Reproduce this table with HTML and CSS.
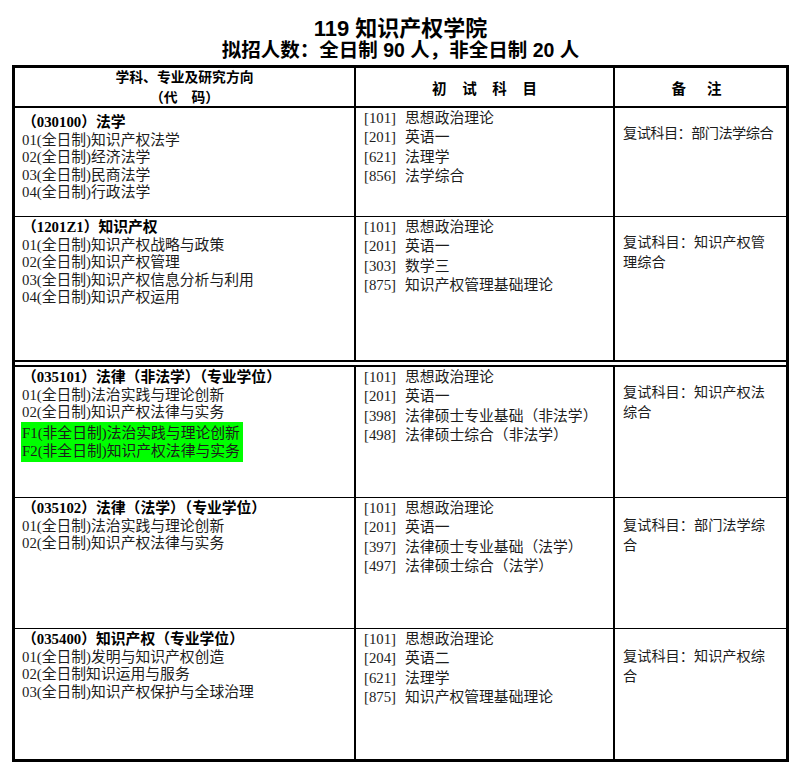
FILE: index.html
```html
<!DOCTYPE html>
<html lang="zh-CN">
<head>
<meta charset="utf-8">
<title>119 知识产权学院</title>
<link rel="stylesheet" href="styles.css">
</head>
<body>
<div class="page">
  <div class="heading">
    <div class="title">119 知识产权学院</div>
    <div class="subtitle">拟招人数：全日制 90 人，非全日制 20 人</div>
  </div>
  <div class="grid">
    <div class="cell hd hd1"><div>学科、专业及研究方向</div><div>（代　码）</div></div>
    <div class="cell hd hd2"><span>初</span><span>试</span><span>科</span><span>目</span></div>
    <div class="cell hd hd3"><span>备</span><span>注</span></div>

    <div class="cell c1 r1 first">
      <div class="major">（030100）法学</div>
      <div>01(全日制)知识产权法学</div>
      <div>02(全日制)经济法学</div>
      <div>03(全日制)民商法学</div>
      <div>04(全日制)行政法学</div>
    </div>
    <div class="cell c2 r1">
      <div><span class="code">[101]</span>思想政治理论</div>
      <div><span class="code">[201]</span>英语一</div>
      <div><span class="code">[621]</span>法理学</div>
      <div><span class="code">[856]</span>法学综合</div>
    </div>
    <div class="cell c3 r1"><div class="tight">复试科目：部门法学综合</div></div>

    <div class="cell c1 r2">
      <div class="major">（1201Z1）知识产权</div>
      <div>01(全日制)知识产权战略与政策</div>
      <div>02(全日制)知识产权管理</div>
      <div>03(全日制)知识产权信息分析与利用</div>
      <div>04(全日制)知识产权运用</div>
    </div>
    <div class="cell c2 r2">
      <div><span class="code">[101]</span>思想政治理论</div>
      <div><span class="code">[201]</span>英语一</div>
      <div><span class="code">[303]</span>数学三</div>
      <div><span class="code">[875]</span>知识产权管理基础理论</div>
    </div>
    <div class="cell c3 r2"><div>复试科目：知识产权管</div><div>理综合</div></div>

    <div class="sep"></div>

    <div class="cell c1 r3">
      <div class="major">（035101）法律（非法学）（专业学位）</div>
      <div>01(全日制)法治实践与理论创新</div>
      <div>02(全日制)知识产权法律与实务</div>
      <div class="mark">
        <div>F1(非全日制)法治实践与理论创新</div>
        <div>F2(非全日制)知识产权法律与实务</div>
      </div>
    </div>
    <div class="cell c2 r3">
      <div><span class="code">[101]</span>思想政治理论</div>
      <div><span class="code">[201]</span>英语一</div>
      <div><span class="code">[398]</span>法律硕士专业基础（非法学）</div>
      <div><span class="code">[498]</span>法律硕士综合（非法学）</div>
    </div>
    <div class="cell c3 r3"><div>复试科目：知识产权法</div><div>综合</div></div>

    <div class="cell c1 r4">
      <div class="major">（035102）法律（法学）（专业学位）</div>
      <div>01(全日制)法治实践与理论创新</div>
      <div>02(全日制)知识产权法律与实务</div>
    </div>
    <div class="cell c2 r4">
      <div><span class="code">[101]</span>思想政治理论</div>
      <div><span class="code">[201]</span>英语一</div>
      <div><span class="code">[397]</span>法律硕士专业基础（法学）</div>
      <div><span class="code">[497]</span>法律硕士综合（法学）</div>
    </div>
    <div class="cell c3 r4 low"><div>复试科目：部门法学综</div><div>合</div></div>

    <div class="cell c1 r5">
      <div class="major">（035400）知识产权（专业学位）</div>
      <div>01(全日制)发明与知识产权创造</div>
      <div>02(全日制知识运用与服务</div>
      <div>03(全日制)知识产权保护与全球治理</div>
    </div>
    <div class="cell c2 r5">
      <div><span class="code">[101]</span>思想政治理论</div>
      <div><span class="code">[204]</span>英语二</div>
      <div><span class="code">[621]</span>法理学</div>
      <div><span class="code">[875]</span>知识产权管理基础理论</div>
    </div>
    <div class="cell c3 r5 low"><div>复试科目：知识产权综</div><div>合</div></div>
  </div>
</div>
</body>
</html>
```

FILE: styles.css
```css
* {
  box-sizing: border-box;
}

html, body {
  margin: 0;
  padding: 0;
  background: #ffffff;
}

.page {
  width: 804px;
  padding: 17px 0 0 12px;
}

.heading {
  width: 777px;
  text-align: center;
  color: #000;
  font-family: "Liberation Sans", "Noto Sans CJK SC", sans-serif;
  font-weight: 700;
  margin-bottom: 5px;
}

.title {
  font-size: 22px;
  line-height: 23px;
}

.subtitle {
  font-size: 19.5px;
  line-height: 20px;
}

.grid {
  width: 777px;
  border: 3px solid #000;
  display: grid;
  grid-template-columns: 341px 259px 171px;
  grid-template-rows: 40px 109px 143px 7px 131px 131px 130px;
  font-family: "Liberation Serif", "Noto Sans CJK SC", serif;
  font-size: 14.8px;
  color: #1c1c1c;
}

.cell {
  border-right: 2px solid #000;
}

.cell.c3,
.cell.hd3 {
  border-right: none;
}

.hd {
  border-bottom: 2px solid #000;
  font-family: "Noto Sans CJK SC", sans-serif;
  font-weight: 700;
  color: #000;
}

.hd1 {
  text-align: center;
  line-height: 20px;
  font-size: 13.8px;
  padding-top: 0;
}

.hd1 > div:first-child {
  margin-top: -2px;
}

.hd2,
.hd3 {
  display: flex;
  justify-content: center;
  align-items: center;
  font-size: 14.5px;
}

.hd2 {
  gap: 15.7px;
}

.hd3 {
  gap: 21px;
  padding-right: 8px;
}

.r1,
.r3,
.r4 {
  border-bottom: 1px solid #000;
}

.c1 {
  padding: 2px 4px 0 7px;
  line-height: 17.5px;
}

.c1.first {
  padding-top: 6px;
}

.major {
  font-weight: 700;
  color: #000;
}

.mark {
  width: fit-content;
  background: #00ff00;
  padding: 2px 3px 2px 1px;
  margin-left: -1px;
  line-height: 18px;
}

.c2 {
  padding: 0.5px 4px 0 8px;
  line-height: 19.5px;
}

.code {
  margin-right: 9px;
}

.c3 {
  padding: 15px 4px 0 8px;
  font-size: 14.2px;
  line-height: 20px;
}

.c3.low {
  padding-top: 17px;
}

.tight {
  letter-spacing: -0.55px;
}

.sep {
  grid-column: 1 / -1;
  border-top: 2px solid #000;
  border-bottom: 2px solid #000;
}
```
